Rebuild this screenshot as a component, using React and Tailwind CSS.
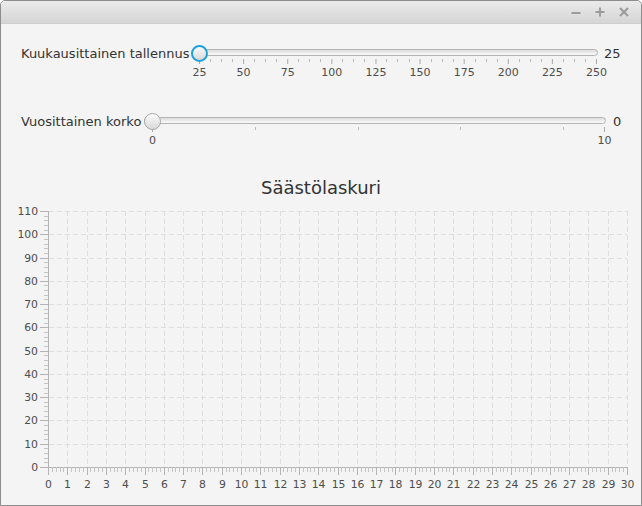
const FONT = { fontFamily: '"DejaVu Sans", "Liberation Sans", sans-serif' };

function TitleBar() {
  return (
    <div className="h-[23px] flex items-center justify-end gap-[14px] pr-[12px] rounded-t-[4px] bg-gradient-to-b from-[#ebebeb] to-[#d5d5d5] border-b border-[#cfcfcf]">
      <svg width="10" height="10" viewBox="0 0 10 10">
        <line x1="0.5" y1="6" x2="9.5" y2="6" stroke="#9c9c9c" strokeWidth="2" />
      </svg>
      <svg width="10" height="10" viewBox="0 0 10 10">
        <line x1="0.5" y1="5" x2="9.5" y2="5" stroke="#9c9c9c" strokeWidth="2" />
        <line x1="5" y1="0.5" x2="5" y2="9.5" stroke="#9c9c9c" strokeWidth="2" />
      </svg>
      <svg width="10" height="10" viewBox="0 0 10 10">
        <line x1="1" y1="1" x2="9" y2="9" stroke="#9c9c9c" strokeWidth="2.2" />
        <line x1="9" y1="1" x2="1" y2="9" stroke="#9c9c9c" strokeWidth="2.2" />
      </svg>
    </div>
  );
}

function Slider({ width, majors, minors, focused }) {
  // tick offsets are measured from the thumb centre at its left-most position (8px in)
  return (
    <div className="relative h-[36px] shrink-0" style={{ width }}>
      <div className="absolute left-0 right-0 top-[4px] h-[7px] rounded-full border border-[#b4b4b4] bg-gradient-to-b from-[#dcdcdc] to-[#fbfbfb]" />
      <svg className="absolute left-0 top-[14px]" width={width} height="6">
        {majors.map((m) => (
          <rect key={"M" + m.at} x={8 + m.at} y="0" width="1" height="5" fill="#a9a9a9" />
        ))}
        {minors.map((x) => (
          <rect key={"m" + x} x={8 + x} y="0" width="1" height="3" fill="#b9b9b9" />
        ))}
      </svg>
      {majors.map((m) => (
        <span
          key={"L" + m.at}
          className="absolute top-[21px] w-[40px] -ml-[20px] text-center text-[11px] leading-[13px] text-[#4d4d4d]"
          style={{ left: 8.5 + m.at }}
        >
          {m.label}
        </span>
      ))}
      <div
        className={
          "absolute left-0 top-0 w-[17px] h-[17px] rounded-full bg-gradient-to-b from-[#fbfbfb] to-[#d9d9d9] " +
          (focused ? "border-2 border-[#1ea2d8]" : "border border-[#a6a6a6]")
        }
      />
    </div>
  );
}

function SliderRow({ label, labelWidth, value, valueGap, children, className }) {
  return (
    <div className={"flex items-start " + className}>
      <div
        className="h-[17px] shrink-0 flex items-center pl-[20px] whitespace-nowrap overflow-hidden text-[13px] text-[#333]"
        style={{ width: labelWidth }}
      >
        {label}
      </div>
      {children}
      <div className="h-[17px] flex items-center text-[13px] text-[#333]" style={{ marginLeft: valueGap }}>
        {value}
      </div>
    </div>
  );
}

function Chart() {
  const yTick = (v) => Math.round(467 - v * 2.3273);
  const xTick = (i) => Math.round(48 + i * 19.3);
  const ys = Array.from({ length: 12 }, (_, k) => k * 10);
  const xs = Array.from({ length: 31 }, (_, k) => k);
  const yMinor = [];
  for (let v = 0; v < 110; v += 2) if (v % 10) yMinor.push(yTick(v));
  const xMinor = [];
  for (let i = 0; i < 30; i++) for (let k = 1; k < 5; k++) xMinor.push(Math.round(48 + (i + k / 5) * 19.3));

  return (
    <svg width="640" height="305" className="block">
      <g transform="translate(-1 -199)">
        {ys.slice(1).map((v) => (
          <line key={"h" + v} x1="49" x2="627" y1={yTick(v) + 0.5} y2={yTick(v) + 0.5} stroke="#dedede" strokeDasharray="5 3" />
        ))}
        {xs.slice(1).map((i) => (
          <line key={"v" + i} x1={xTick(i) + 0.5} x2={xTick(i) + 0.5} y1="211" y2="467" stroke="#dedede" strokeDasharray="5 3" />
        ))}
        <line x1="48.5" x2="48.5" y1="211" y2="468" stroke="#b3b3b3" />
        <line x1="48" x2="628" y1="467.5" y2="467.5" stroke="#b3b3b3" />
        {ys.map((v) => (
          <line key={"yt" + v} x1="40" x2="48" y1={yTick(v) + 0.5} y2={yTick(v) + 0.5} stroke="#b3b3b3" />
        ))}
        {yMinor.map((y, k) => (
          <line key={"ym" + k} x1="44" x2="48" y1={y + 0.5} y2={y + 0.5} stroke="#c4c4c4" />
        ))}
        {xs.map((i) => (
          <line key={"xt" + i} x1={xTick(i) + 0.5} x2={xTick(i) + 0.5} y1="467" y2="475" stroke="#b3b3b3" />
        ))}
        {xMinor.map((x, k) => (
          <line key={"xm" + k} x1={x + 0.5} x2={x + 0.5} y1="467" y2="472" stroke="#c4c4c4" />
        ))}
        {ys.map((v) => (
          <text key={"yl" + v} x="38" y={yTick(v) + 4} textAnchor="end" fontSize="10.8" fill="#4d4d4d" style={FONT}>
            {v}
          </text>
        ))}
        {xs.map((i) => (
          <text key={"xl" + i} x={xTick(i) + 0.5} y="488" textAnchor="middle" fontSize="10.8" fill="#4d4d4d" style={FONT}>
            {i}
          </text>
        ))}
      </g>
    </svg>
  );
}

export default function App() {
  const majors1 = Array.from({ length: 10 }, (_, k) => ({ at: k * 44.11, label: String(25 + k * 25) }));
  const minors1 = [];
  for (let k = 0; k < 9; k++) for (let j = 1; j < 4; j++) minors1.push(Math.round((k + j / 4) * 44.11));
  const majors2 = [
    { at: 0, label: "0" },
    { at: 452, label: "10" },
  ];
  const minors2 = [103, 206, 308, 411];

  return (
    <div className="w-[642px] h-[506px] flex flex-col border border-[#8d8d8d] rounded-t-[5px] bg-[#f4f4f4] overflow-hidden" style={FONT}>
      <TitleBar />
      <SliderRow label="Kuukausittainen tallennus" labelWidth={190} value="25" valueGap={6} className="mt-[21px]">
        <Slider width={407} majors={majors1} minors={minors1} focused />
      </SliderRow>
      <SliderRow label="Vuosittainen korko" labelWidth={143} value="0" valueGap={7} className="mt-[32px]">
        <Slider width={462} majors={majors2} minors={minors2} />
      </SliderRow>
      <div className="mt-[28px] h-[22px] leading-[22px] text-center text-[18px] text-[#333]">Säästölaskuri</div>
      <Chart />
    </div>
  );
}
